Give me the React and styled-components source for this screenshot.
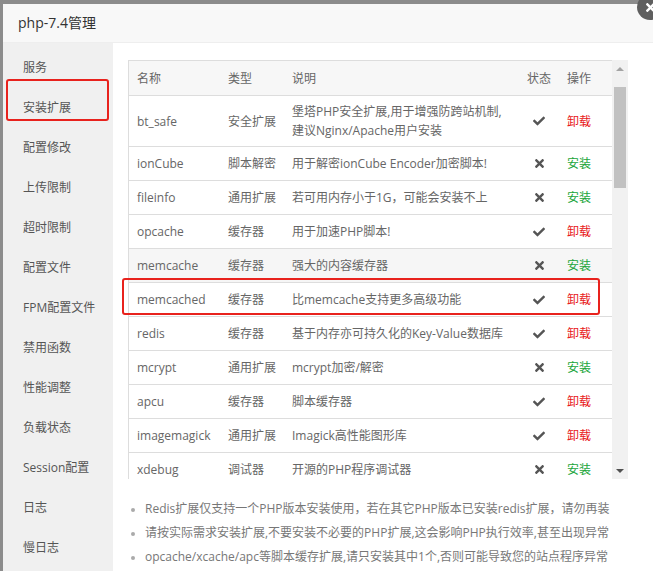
import React from "react";
import styled, { createGlobalStyle } from "styled-components";
import { FaCheck, FaTimes } from "react-icons/fa";

const GlobalStyle = createGlobalStyle`
  html, body {
    margin: 0;
    padding: 0;
    background: #8c8c8c;
    overflow: hidden;
  }
  body {
    font-family: "Open Sans", "Noto Sans CJK SC", sans-serif;
    font-size: 12px;
  }
`;

const Page = styled.div`
  width: 653px;
  height: 571px;
  padding: 4px 0 0 3px;
  box-sizing: border-box;
  overflow: hidden;
  position: relative;
`;

const Dialog = styled.div`
  width: 700px;
  height: 620px;
  background: #fff;
  display: flex;
  flex-direction: column;
  position: relative;
`;

const TitleBar = styled.div`
  height: 38px;
  line-height: 38px;
  padding-left: 15px;
  background: #f8f8f8;
  border-bottom: 1px solid #eee;
  color: #333;
  font-size: 14px;
  flex-shrink: 0;
`;

const Close = styled.div`
  position: absolute;
  top: -10px;
  left: 634px;
  width: 26px;
  height: 26px;
  border-radius: 50%;
  background: #5f5f5f;
  color: #fff;
  display: flex;
  align-items: center;
  justify-content: center;
  font-size: 13px;
`;

const Body = styled.div`
  display: flex;
  flex: 1;
`;

const Sidebar = styled.div`
  width: 110px;
  background: #f0f0f0;
  padding-top: 5px;
  position: relative;
  flex-shrink: 0;
`;

const NavItem = styled.div`
  height: 40px;
  line-height: 40px;
  padding-left: 20px;
  color: #555;
`;

const Mark = styled.div`
  position: absolute;
  border: 2px solid #e8221d;
  border-radius: 3px;
  box-sizing: border-box;
`;

const Content = styled.div`
  flex: 1;
  padding: 17px 0 0 15px;
  position: relative;
`;

const TableBox = styled.div`
  width: 500px;
  height: 419px;
  display: flex;
  overflow: hidden;
`;

const Table = styled.div`
  width: 484px;
  border-left: 1px solid #ddd;
  border-top: 1px solid #ddd;
  box-sizing: border-box;
  color: #666;
`;

const Row = styled.div`
  display: grid;
  grid-template-columns: 91px 64px 235px 40px 1fr;
  align-items: center;
  height: ${({ $h }) => $h || 34}px;
  box-sizing: border-box;
  border-bottom: 1px solid #ddd;
  background: ${({ $bg }) => $bg || "#fff"};
`;

const Cell = styled.div`
  padding-left: ${({ $center }) => ($center ? 0 : 8)}px;
  text-align: ${({ $center }) => ($center ? "center" : "left")};
  white-space: nowrap;
  line-height: 19px;
  color: ${({ $color }) => $color || "inherit"};
  display: ${({ $center }) => ($center ? "flex" : "block")};
  justify-content: center;
`;

const Icon = styled.span`
  display: flex;
  color: #555;
  font-size: ${({ $size }) => $size}px;
`;

const Scrollbar = styled.div`
  width: 16px;
  background: #f1f1f1;
  display: flex;
  flex-direction: column;
  align-items: center;
`;

const Arrow = styled.div`
  height: 17px;
  display: flex;
  align-items: center;
  justify-content: center;
  width: 100%;
  &::after {
    content: "";
    border-left: 4px solid transparent;
    border-right: 4px solid transparent;
    ${({ $down }) =>
      $down
        ? "border-top: 4px solid #505050;"
        : "border-bottom: 4px solid #a3a3a3;"}
  }
`;

const Track = styled.div`
  flex: 1;
  width: 100%;
  display: flex;
  justify-content: center;
`;

const Thumb = styled.div`
  width: 12px;
  height: 101px;
  margin-top: 10px;
  background: #c1c1c1;
`;

const Notes = styled.ul`
  margin: 18px 0 0;
  padding: 0 0 0 17px;
  color: #777;
  li {
    line-height: 24px;
    white-space: nowrap;
  }
  li::marker {
    color: #aaa;
    font-size: 10px;
  }
`;

const RED = "#e81818";
const GREEN = "#20a53a";

const rows = [
  ["bt_safe", "安全扩展", ["堡塔PHP安全扩展,用于增强防跨站机制,", "建议Nginx/Apache用户安装"], true],
  ["ionCube", "脚本解密", "用于解密ionCube Encoder加密脚本!", false],
  ["fileinfo", "通用扩展", "若可用内存小于1G，可能会安装不上", false],
  ["opcache", "缓存器", "用于加速PHP脚本!", true],
  ["memcache", "缓存器", "强大的内容缓存器", false],
  ["memcached", "缓存器", "比memcache支持更多高级功能", true],
  ["redis", "缓存器", "基于内存亦可持久化的Key-Value数据库", true],
  ["mcrypt", "通用扩展", "mcrypt加密/解密", false],
  ["apcu", "缓存器", "脚本缓存器", true],
  ["imagemagick", "通用扩展", "Imagick高性能图形库", true],
  ["xdebug", "调试器", "开源的PHP程序调试器", false],
];

const menu = [
  "服务",
  "安装扩展",
  "配置修改",
  "上传限制",
  "超时限制",
  "配置文件",
  "FPM配置文件",
  "禁用函数",
  "性能调整",
  "负载状态",
  "Session配置",
  "日志",
  "慢日志",
];

export default function App() {
  return (
    <Page>
      <GlobalStyle />
      <Dialog>
        <TitleBar>php-7.4管理</TitleBar>
        <Close>
          <FaTimes />
        </Close>
        <Body>
          <Sidebar>
            {menu.map((m) => (
              <NavItem key={m}>{m}</NavItem>
            ))}
            <Mark style={{ left: 3, top: 36, width: 103, height: 42 }} />
          </Sidebar>
          <Content>
            <TableBox>
              <Table>
                <Row $h={35} $bg="#f7f7f7">
                  <Cell>名称</Cell>
                  <Cell>类型</Cell>
                  <Cell>说明</Cell>
                  <Cell $center>状态</Cell>
                  <Cell>操作</Cell>
                </Row>
                {rows.map(([name, type, desc, ok]) => (
                  <Row
                    key={name}
                    $h={Array.isArray(desc) ? 51 : 34}
                    $bg={name === "memcache" ? "#f6f6f6" : "#fff"}
                  >
                    <Cell>{name}</Cell>
                    <Cell>{type}</Cell>
                    <Cell>
                      {Array.isArray(desc) ? (
                        <>
                          {desc[0]}
                          <br />
                          {desc[1]}
                        </>
                      ) : (
                        desc
                      )}
                    </Cell>
                    <Cell $center>
                      <Icon $size={ok ? 12 : 13}>{ok ? <FaCheck /> : <FaTimes />}</Icon>
                    </Cell>
                    <Cell $color={ok ? RED : GREEN}>{ok ? "卸载" : "安装"}</Cell>
                  </Row>
                ))}
              </Table>
              <Scrollbar>
                <Arrow />
                <Track>
                  <Thumb />
                </Track>
                <Arrow $down />
              </Scrollbar>
            </TableBox>
            <Mark style={{ left: 9, top: 235, width: 478, height: 37 }} />
            <Notes>
              <li>Redis扩展仅支持一个PHP版本安装使用，若在其它PHP版本已安装redis扩展，请勿再装</li>
              <li>请按实际需求安装扩展,不要安装不必要的PHP扩展,这会影响PHP执行效率,甚至出现异常</li>
              <li>opcache/xcache/apc等脚本缓存扩展,请只安装其中1个,否则可能导致您的站点程序异常</li>
            </Notes>
          </Content>
        </Body>
      </Dialog>
    </Page>
  );
}
